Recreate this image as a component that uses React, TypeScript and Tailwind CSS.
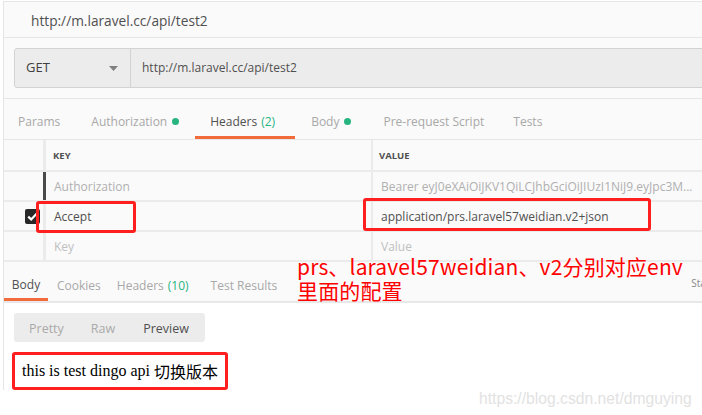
import React from "react";

const GreenDot = ({ ml }: { ml: string }) => (
  <span className={`${ml} inline-block h-[7px] w-[7px] shrink-0 rounded-full bg-[#26b47f]`} />
);

export default function App() {
  return (
    <div
      className="relative h-[415px] w-[702px] overflow-hidden bg-white text-[#505050]"
      style={{ fontFamily: '"Open Sans", "Noto Sans", sans-serif' }}
    >
      <div className="ml-[3px] mt-[1px] flex flex-col border-l border-t border-[#e6e6e6] bg-[#fafafa]">
        {/* title */}
        <div className="flex h-[36px] items-center border-b border-[#e6e6e6] pl-[27px] pt-[4px] text-[13.7px]">
          http://m.laravel.cc/api/test2
        </div>
        {/* request bar */}
        <div className="border-b border-[#e6e6e6] pb-[10px] pl-[10px] pt-[10px]">
          <div className="-mr-[4px] flex h-[40px] rounded-l-[3px] border border-[#d3d3d3] bg-[#ececec] text-[13px]">
            <div className="flex w-[116px] items-center justify-between border-r border-[#d3d3d3] pl-[11px] pr-[12px] text-[#404040]">
              <span>GET</span>
              <svg width="9" height="5" viewBox="0 0 9 5">
                <path d="M0 0 L9 0 L4.5 5 Z" fill="#808080" />
              </svg>
            </div>
            <div className="flex items-center pl-[11px] text-[12px] text-[#505050]">http://m.laravel.cc/api/test2</div>
          </div>
        </div>
        {/* request tabs */}
        <div className="flex h-[41px] items-stretch whitespace-nowrap border-b border-[#e6e6e6] text-[12px] text-[#a8a8a8]">
          <div className="flex items-center pl-[14px] pr-[31px] pt-[5px]">Params</div>
          <div className="flex items-center pr-[16px] pt-[5px]">
            Authorization
            <GreenDot ml="ml-[5px]" />
          </div>
          <div className="flex items-center border-b-[3px] border-[#f26b3a] pl-[15px] pr-[20px] pt-[8px] text-[#505050]">
            Headers<span className="ml-[4px] text-[#26b47f]">(2)</span>
          </div>
          <div className="flex items-center pl-[16px] pr-[32px] pt-[5px]">
            Body
            <GreenDot ml="ml-[5px]" />
          </div>
          <div className="flex items-center pr-[29px] pt-[5px]">Pre-request Script</div>
          <div className="flex items-center pt-[5px]">Tests</div>
        </div>
        {/* table */}
        <div className="flex flex-col text-[12px]">
          <div className="flex h-[32px] border-b-2 border-[#ebebeb]">
            <div className="w-[42px] border-r-[3px] border-[#ebebeb]" />
            <div className="flex w-[327px] items-center border-r-2 border-[#ebebeb] pl-[7px] pt-[3px] text-[9.5px] font-bold">KEY</div>
            <div className="flex flex-1 items-center pl-[6px] pt-[3px] text-[9.5px] font-bold">VALUE</div>
          </div>
          <div className="flex h-[30px] border-b-2 border-[#ebebeb]">
            <div className="w-[42px] border-r-[3px] border-[#4a4a4a]" />
            <div className="flex w-[327px] items-center border-r-2 border-[#ebebeb] pl-[8px] pt-[2px] text-[#b0b0b0]">Authorization</div>
            <div className="flex flex-1 items-center whitespace-nowrap pl-[8px] pt-[2px] text-[#b0b0b0]">
              Bearer eyJ0eXAiOiJKV1QiLCJhbGciOiJIUzI1NiJ9.eyJpc3M...
            </div>
          </div>
          <div className="flex h-[30px] border-b-2 border-[#ebebeb]">
            <div className="flex w-[42px] items-center justify-end border-r-[3px] border-[#ebebeb] pr-[3px] pt-[1px]">
              <div className="flex h-[15px] w-[15px] items-center justify-center rounded-[2px] bg-[#282828]">
                <svg width="11" height="9" viewBox="0 0 11 9">
                  <path d="M1.2 4.6 L4.2 7.4 L9.8 1.4" stroke="#fff" strokeWidth="2.2" fill="none" />
                </svg>
              </div>
            </div>
            <div className="flex w-[327px] items-center border-r-2 border-[#ebebeb] pl-[8px] pt-[2px] text-[#505050]">Accept</div>
            <div className="flex flex-1 items-center pl-[8px] pt-[2px] text-[#505050]">application/prs.laravel57weidian.v2+json</div>
          </div>
          <div className="flex h-[30px] border-b-2 border-[#ebebeb]">
            <div className="w-[42px] border-r-[3px] border-[#ebebeb]" />
            <div className="flex w-[327px] items-center border-r-2 border-[#ebebeb] pl-[8px] pt-[2px] text-[#c0c0c0]">Key</div>
            <div className="flex flex-1 items-center pl-[8px] pt-[2px] text-[#c0c0c0]">Value</div>
          </div>
        </div>
        {/* response tabs */}
        <div className="mt-[6px] flex h-[35px] items-stretch whitespace-nowrap border-b-2 border-[#e8e8e8] text-[12px] text-[#a8a8a8]">
          <div className="flex w-[44px] shrink-0 items-center justify-center border-b-[3px] border-[#f26b3a] pt-[3px] text-[#505050]">Body</div>
          <div className="flex items-center pl-[9px] pr-[16px] pt-[3px]">Cookies</div>
          <div className="flex items-center pr-[22px] pt-[3px]">
            Headers<span className="ml-[4px] text-[#26b47f]">(10)</span>
          </div>
          <div className="flex items-center pt-[3px]">Test Results</div>
          <div className="ml-[414px] flex shrink-0 items-center pb-[2px] text-[10px] text-[#888]">Status</div>
        </div>
      </div>
      {/* response body */}
      <div className="ml-[3px] border-l border-[#e6e6e6] bg-white pl-[10px] pt-[10px]">
        <div className="flex h-[29px] w-[191px] items-center rounded-[3px] bg-[#ececec] pt-[4px] text-[12.5px]">
          <span className="pl-[15px] text-[#aaa]">Pretty</span>
          <span className="pl-[27px] text-[#aaa]">Raw</span>
          <span className="pl-[28px] text-[#505050]">Preview</span>
        </div>
        <div
          className="-ml-[2px] mt-[10px] flex h-[38px] w-[216px] items-center rounded-[3px] border-[3px] border-[#ff1f1f] pl-[7px] text-[16px] text-black"
          style={{ fontFamily: '"Liberation Serif", "Noto Sans CJK SC", serif' }}
        >
          this is test dingo api{" "}
          <span className="ml-[4px]" style={{ fontFamily: '"Noto Sans CJK SC", sans-serif' }}>
            切换版本
          </span>
        </div>
      </div>

      {/* annotation overlays */}
      <div className="absolute left-[36px] top-[201px] h-[32px] w-[100px] rounded-[3px] border-[3px] border-[#ff1f1f]" />
      <div className="absolute left-[363px] top-[198px] h-[33px] w-[288px] rounded-[3px] border-[3px] border-[#ff1f1f]" />
      <div
        className="absolute left-[297px] top-[254px] whitespace-nowrap text-[21px] leading-[24px] tracking-[0.15px] text-[#ff0000]"
        style={{ fontFamily: '"Noto Sans CJK SC", "Noto Sans", sans-serif' }}
      >
        <div>prs、laravel57weidian、v2分别对应env</div>
        <div>里面的配置</div>
      </div>
      <div
        className="absolute left-[479px] top-[387px] text-[15.7px] text-[#e2e2e2]"
        style={{ fontFamily: '"Liberation Sans", Arial, sans-serif' }}
      >
        https://blog.csdn.net/dmguying
      </div>
    </div>
  );
}
